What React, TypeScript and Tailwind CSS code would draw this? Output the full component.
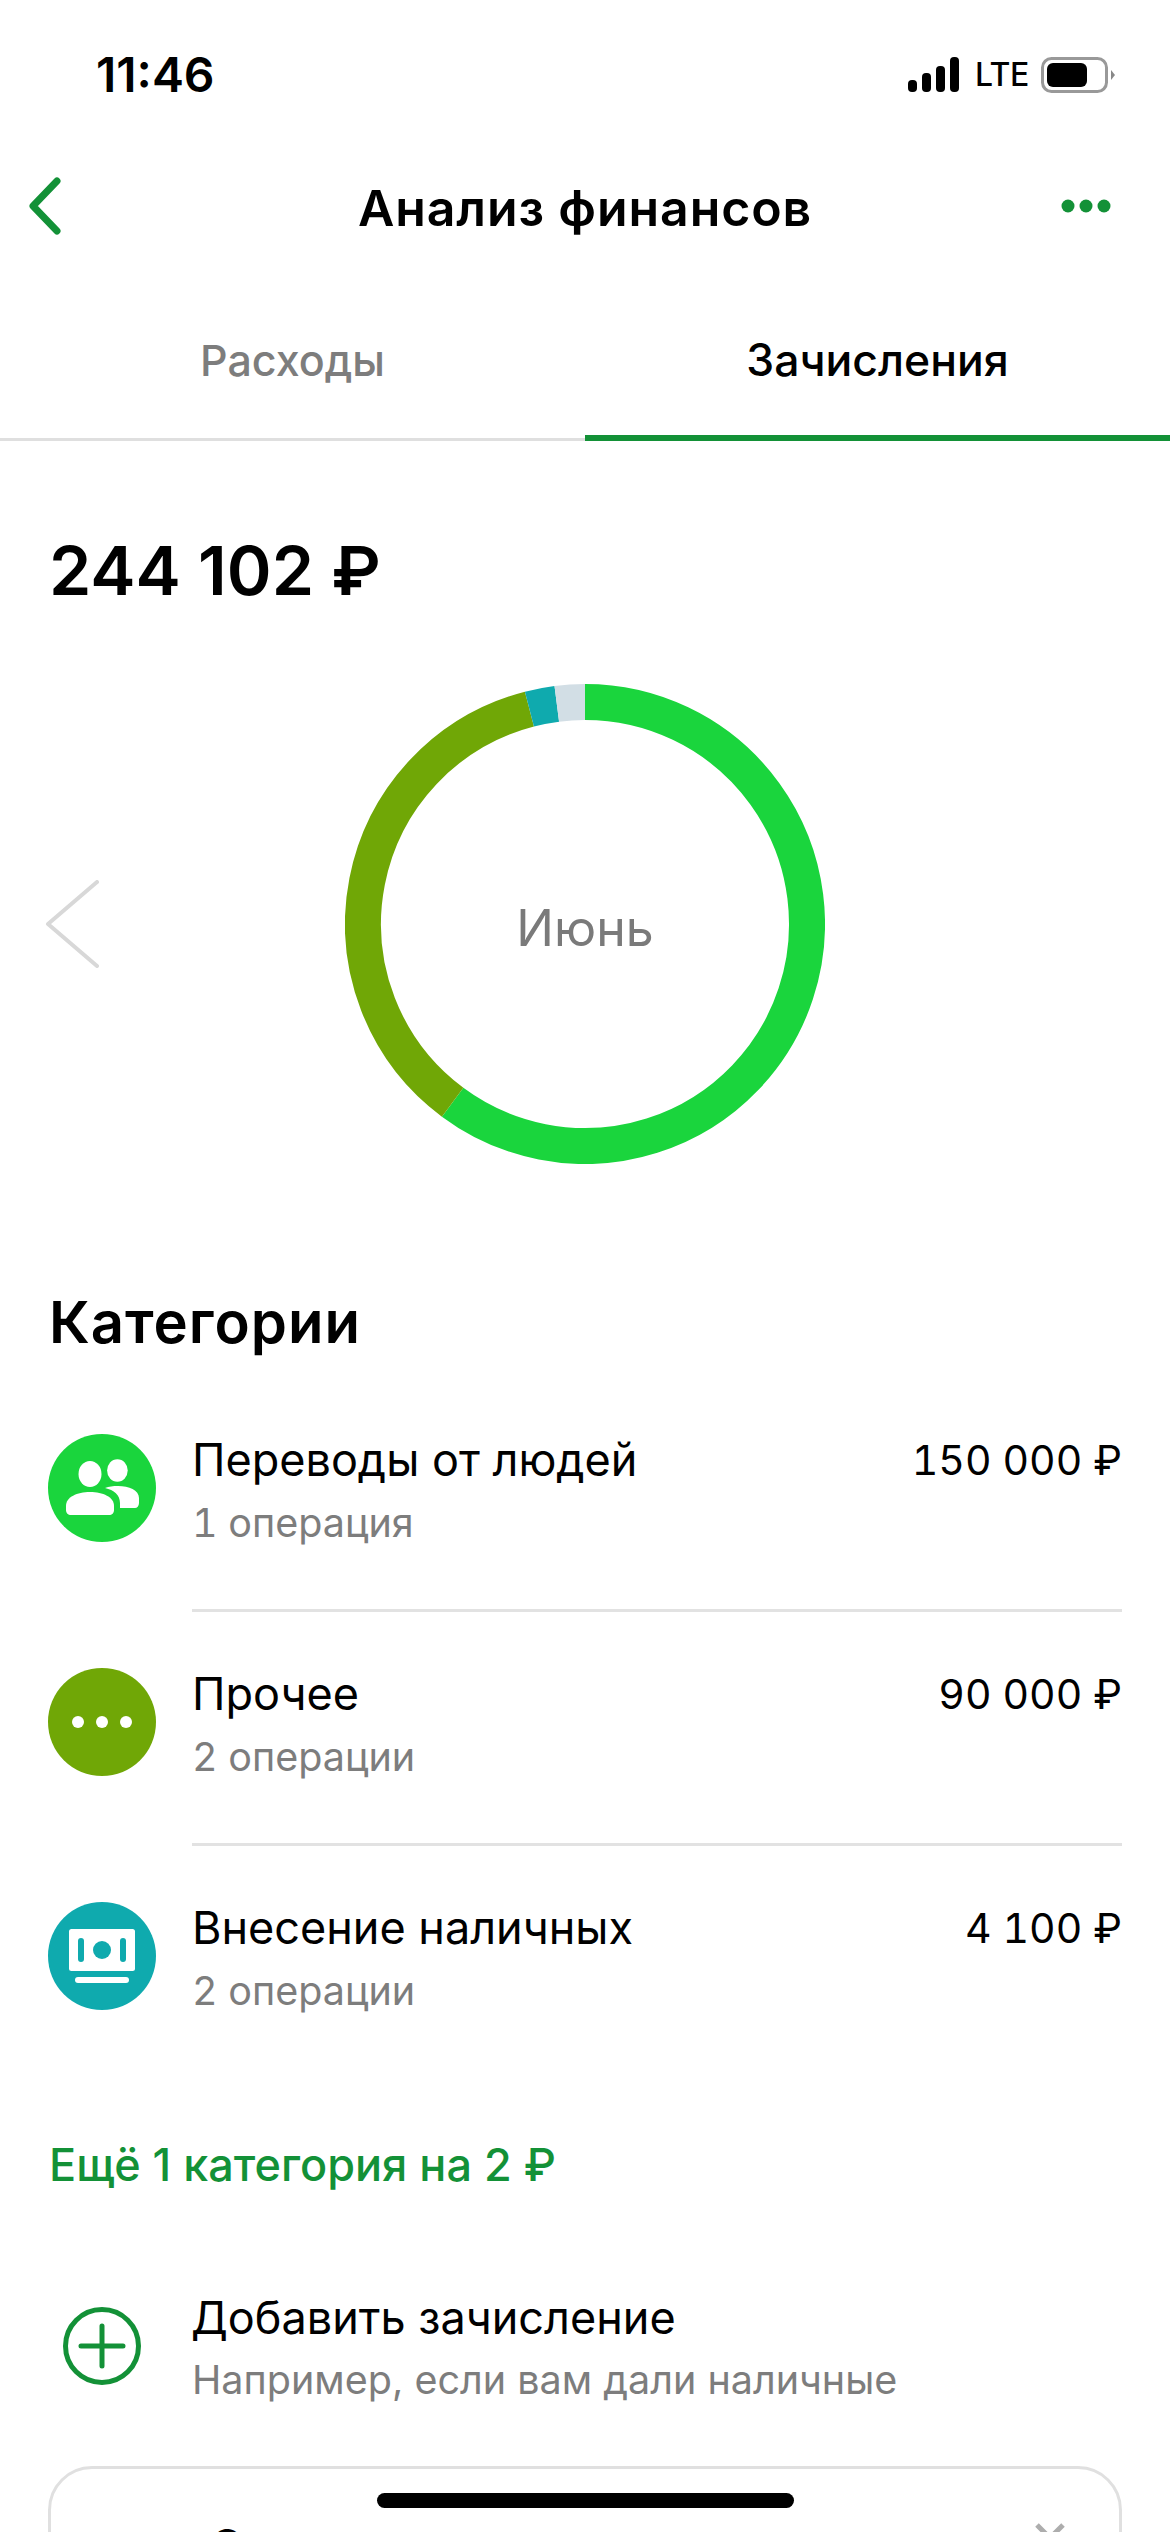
import React from "react";

function arc(a0: number, a1: number, r = 222, c = 240) {
  const p = (a: number) => {
    const t = (a * Math.PI) / 180;
    return `${c + r * Math.sin(t)} ${c - r * Math.cos(t)}`;
  };
  return `M ${p(a0)} A ${r} ${r} 0 ${a1 - a0 > 180 ? 1 : 0} 1 ${p(a1)}`;
}

function PeopleIcon() {
  return (
    <svg width="108" height="108" viewBox="0 0 108 108" fill="#fff">
      <ellipse cx="42" cy="40" rx="11.5" ry="13" />
      <ellipse cx="69.4" cy="36.5" rx="10.3" ry="11.3" />
      <path d="M18 72c0-9 11-14 24-14s24 5 24 14v4c0 3-2 5-5 5H23c-3 0-5-2-5-5z" />
      <path d="M57 54c4-1.500 8-2 13-2 11 0 21 4 21 12v5c0 3-2 5-4 5H72v-5c0-8-6-13-15-15z" />
    </svg>
  );
}

function DotsIcon() {
  return (
    <svg width="108" height="108" viewBox="0 0 108 108" fill="#fff">
      <circle cx="30" cy="54" r="6" />
      <circle cx="54" cy="54" r="6" />
      <circle cx="78" cy="54" r="6" />
    </svg>
  );
}

function CashIcon() {
  return (
    <svg width="108" height="108" viewBox="0 0 108 108">
      <rect x="21" y="27" width="66" height="42" rx="2.5" fill="#fff" />
      <rect x="30" y="36" width="6" height="24" rx="3" fill="#0faaae" />
      <rect x="72" y="36" width="6" height="24" rx="3" fill="#0faaae" />
      <circle cx="54" cy="48" r="9" fill="#0faaae" />
      <rect x="27" y="75" width="54" height="6" rx="3" fill="#fff" />
    </svg>
  );
}

const rows = [
  { title: "Переводы от людей", sub: "1 операция", amount: "150 000 ₽", bg: "bg-[#1ad53d]", icon: <PeopleIcon />, line: true },
  { title: "Прочее", sub: "2 операции", amount: "90 000 ₽", bg: "bg-[#70a706]", icon: <DotsIcon />, line: true },
  { title: "Внесение наличных", sub: "2 операции", amount: "4 100 ₽", bg: "bg-[#0faaae]", icon: <CashIcon />, line: false },
];

export default function App() {
  return (
    <div className="relative h-[2532px] w-[1170px] overflow-hidden bg-white font-['Inter',sans-serif] text-black">
      {/* status bar */}
      <div className="flex h-[150px] items-center justify-between pl-[96px] pr-[55px]">
        <span className="text-[48px] leading-[56px] font-semibold">11:46</span>
        <div className="flex items-center">
          <svg width="52" height="36" viewBox="0 0 52 36" fill="#000">
            <rect x="0" y="23" width="9" height="12" rx="4" />
            <rect x="14" y="16" width="9" height="19" rx="4" />
            <rect x="28" y="9" width="9" height="26" rx="4" />
            <rect x="42" y="0" width="9" height="35" rx="4" />
          </svg>
          <span className="ml-[15px] w-[51px] text-[32px] leading-[40px] font-medium tracking-[-0.5px]">LTE</span>
          <svg className="ml-[15px]" width="74" height="36" viewBox="0 0 74 36">
            <rect x="1.5" y="1.5" width="64" height="33" rx="9" fill="none" stroke="#999" strokeWidth="3" />
            <rect x="6" y="6" width="40" height="24" rx="6" fill="#000" />
            <path d="M70 13l4 5-4 5z" fill="#888" />
          </svg>
        </div>
      </div>

      {/* header */}
      <div className="grid h-[116px] grid-cols-[1fr_auto_1fr] items-center px-[59px]">
        <svg className="-mt-[4px] -ml-[31px]" width="34" height="58" viewBox="0 0 34 58" fill="none">
          <path d="M29 4L5 29l24 25" stroke="#139137" strokeWidth="7" strokeLinecap="round" strokeLinejoin="round" />
        </svg>
        <span className="text-[50px] leading-[60px] font-semibold tracking-[0.9px]">Анализ финансов</span>
        <svg className="-mt-[4px] justify-self-end" width="50" height="14" viewBox="0 0 50 14" fill="#139137">
          <circle cx="7" cy="7" r="6.5" />
          <circle cx="25" cy="7" r="6.5" />
          <circle cx="43" cy="7" r="6.5" />
        </svg>
      </div>

      {/* tabs */}
      <div className="flex h-[175px]">
        <div className="flex flex-1 justify-center border-b-[3px] border-[#dfdfdf] pt-[66px] text-[43px] leading-[56px] font-medium text-[#7d7d7d]">
          Расходы
        </div>
        <div className="flex flex-1 justify-center border-b-[6px] border-[#139137] pt-[66px] text-[44.500px] leading-[56px] font-medium">
          Зачисления
        </div>
      </div>

      {/* total */}
      <div className="mt-[89px] pl-[49px] text-[68px] leading-[80px] font-semibold">244 102 ₽</div>

      {/* donut */}
      <div className="mt-[74px] grid h-[480px] grid-cols-[345px_480px_345px] items-center">
        <svg className="ml-[45px]" width="54" height="88" viewBox="0 0 54 88" fill="none">
          <path d="M52 2L3 44l49 42" stroke="#d8d8d8" strokeWidth="4" strokeLinecap="round" strokeLinejoin="round" />
        </svg>
        <div className="relative h-[480px] w-[480px]">
          <svg width="480" height="480" viewBox="0 0 480 480" fill="none" strokeWidth="36">
            <path d={arc(0, 216.6)} stroke="#1ad53d" />
            <path d={arc(216.6, 345.5)} stroke="#70a706" />
            <path d={arc(345.5, 352.7)} stroke="#0faaae" />
            <path d={arc(352.7, 360)} stroke="#d2dee5" />
          </svg>
          <div className="absolute inset-0 flex items-center justify-center pt-[8px] text-[50px] leading-[60px] text-[#7a7a7a]">Июнь</div>
        </div>
      </div>

      {/* categories */}
      <div className="mt-[123px] pl-[49px] text-[58px] leading-[70px] font-semibold tracking-[1px]">Категории</div>

      <div className="mt-[75px] flex flex-col gap-[54px] pl-[48px] pr-[48px]">
        {rows.map((r) => (
          <div key={r.title} className="flex h-[180px] gap-[36px]">
            <div className={`mt-[2px] flex h-[108px] w-[108px] shrink-0 items-center justify-center rounded-full ${r.bg}`}>{r.icon}</div>
            <div className={`flex-1 ${r.line ? "border-b-[3px] border-[#e2e2e2]" : ""}`}>
              <div className="flex items-center justify-between text-[45px] leading-[56px]">
                <span>{r.title}</span>
                <span className="text-[41px] tabular-nums">{r.amount}</span>
              </div>
              <div className="mt-[11px] text-[39.500px] leading-[48px] text-[#7d7d7d] tabular-nums">{r.sub}</div>
            </div>
          </div>
        ))}
      </div>

      {/* more */}
      <div className="mt-[57px] pl-[49px] text-[45px] leading-[56px] font-medium text-[#139137]">Ещё 1 категория на 2 ₽</div>

      {/* add */}
      <div className="mt-[97px] flex gap-[50px] pl-[63px]">
        <svg className="mt-[17px] shrink-0" width="78" height="78" viewBox="0 0 78 78" fill="none" stroke="#139137" strokeWidth="5" strokeLinecap="round">
          <circle cx="39" cy="39" r="36.500" />
          <path d="M39 19v40M18 39h42" />
        </svg>
        <div>
          <div className="text-[45px] leading-[56px]">Добавить зачисление</div>
          <div className="mt-[10px] pl-[1px] text-[39.500px] leading-[48px] text-[#7d7d7d]">Например, если вам дали наличные</div>
        </div>
      </div>

      {/* card */}
      <div className="mx-[48px] mt-[62px] flex h-[120px] items-start justify-between rounded-[44px] border-[3px] border-[#e0e0e0] pl-[159px] pr-[53px] pt-[49px]">
        <span className="text-[45px] leading-[56px]">С</span>
        <svg className="mt-[4px]" width="32" height="32" viewBox="0 0 32 32" fill="none" stroke="#adadad" strokeWidth="5">
          <path d="M3 3l26 26M29 3L3 29" />
        </svg>
      </div>

      {/* home indicator */}
      <div className="absolute bottom-[24px] left-[377px] h-[15px] w-[417px] rounded-full bg-black" />
    </div>
  );
}
